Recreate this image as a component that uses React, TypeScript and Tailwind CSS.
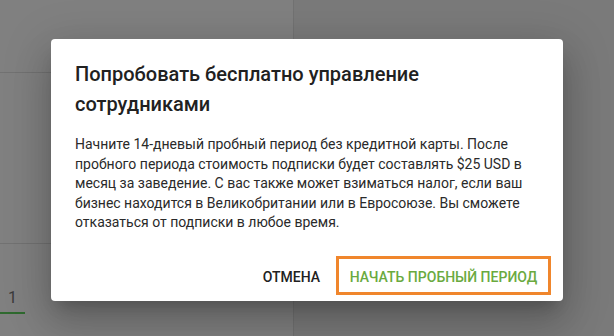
const App = () => {
  return (
    <div
      className="relative h-[336px] w-[614px] overflow-hidden bg-[#7a7a7a]"
      style={{ fontFamily: "Roboto, 'Liberation Sans', sans-serif" }}
    >
      {/* Page behind the overlay */}
      <div className="flex h-full">
        <div className="flex h-full w-[294px] flex-col border-r border-[#727272] bg-[#808080]">
          <div className="h-[73px] border-b border-[#727272]" />
          <div className="h-[171px] border-b border-[#727272]" />
          <div className="pt-[45px]">
            <div className="w-[25px] border-b-2 border-[#2f6a2f] pb-[5px] pl-[8px] text-[16px] leading-[18px] text-[#3a3a3a]">
              1
            </div>
          </div>
        </div>
        <div className="flex-1" />
      </div>

      {/* Dialog */}
      <div className="absolute inset-0 flex justify-center pt-[39px]">
        <div className="flex h-[262px] w-[512px] flex-col rounded-[4px] bg-white shadow-[0_11px_15px_-7px_rgba(0,0,0,0.2),0_24px_38px_3px_rgba(0,0,0,0.14),0_9px_46px_8px_rgba(0,0,0,0.12)]">
          <h2 className="px-6 pt-[20px] text-[20px] font-medium leading-[30px] text-[#212121]">
            Попробовать бесплатно управление
            <br />
            сотрудниками
          </h2>
          <p className="mt-[16px] px-6 text-[14px] leading-[19.6px] text-[#2a2a2a]">
            Начните 14-дневый пробный период без кредитной карты. После
            пробного периода стоимость подписки будет составлять $25 USD в
            месяц за заведение. С вас также может взиматься налог, если ваш
            бизнес находится в Великобритании или в Евросоюзе. Вы сможете
            отказаться от подписки в любое время.
          </p>
          <div className="mt-auto flex items-center justify-end gap-[16px] pb-[6px] pr-[12px]">
            <button className="pt-[2px] text-[14px] font-medium uppercase leading-[16px] text-[#212121]">
              Отмена
            </button>
            <button className="flex h-[39px] w-[215px] items-center justify-center border-[3px] border-[#f0862c] pt-[2px] text-[14px] font-medium uppercase leading-[16px] text-[#6aaa3f]">
              Начать пробный период
            </button>
          </div>
        </div>
      </div>
    </div>
  );
};

export default App;
